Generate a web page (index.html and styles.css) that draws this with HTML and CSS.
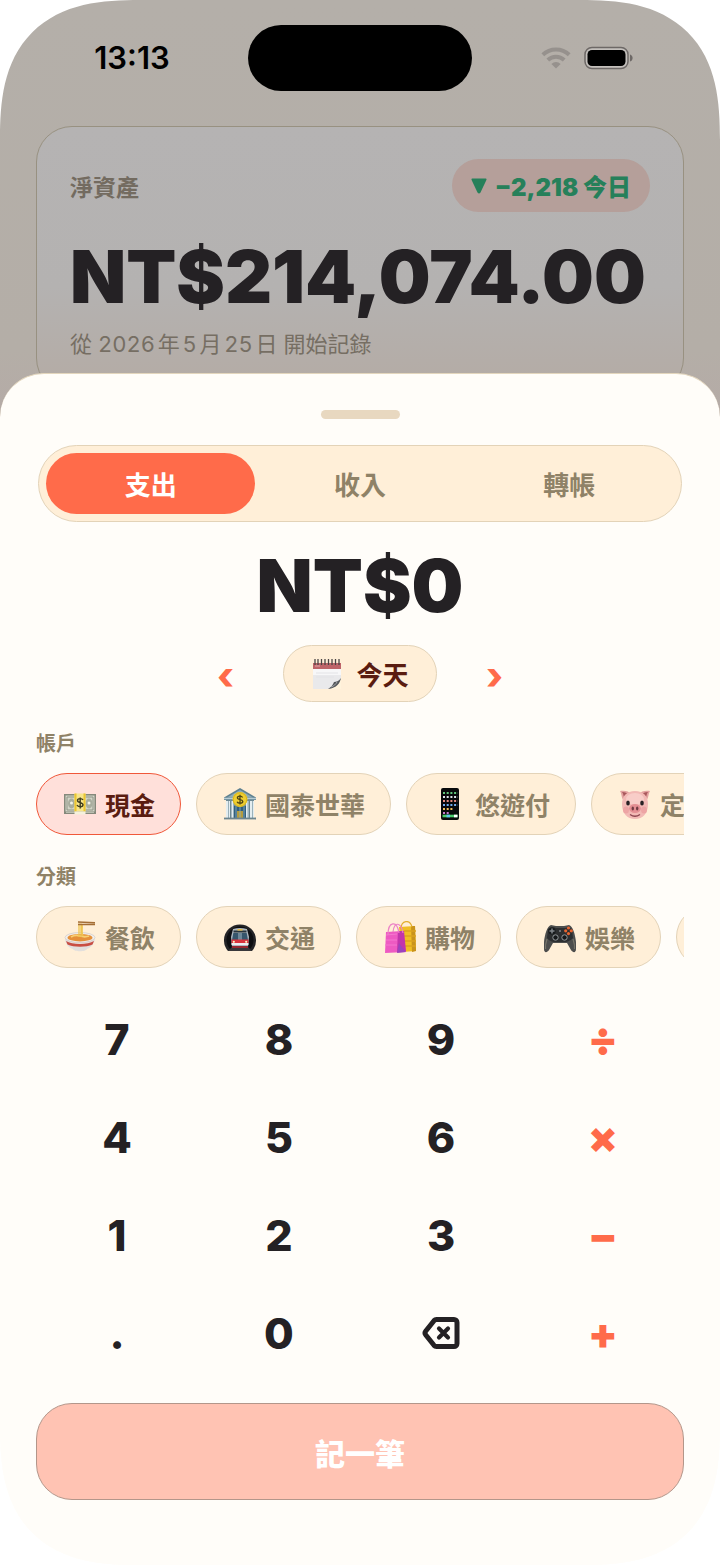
FILE: index.html
```html
<!DOCTYPE html>
<html lang="zh-Hant">
<head>
<meta charset="utf-8">
<meta name="viewport" content="width=device-width, initial-scale=1">
<title>記一筆</title>
<link rel="stylesheet" href="styles.css">
</head>
<body>
<div class="screen">
  <header class="status">
    <time class="status-time">13:13</time>
    <div class="island"></div>
    <div class="status-icons">
      <svg class="wifi" viewBox="0 0 30 22" aria-hidden="true"><g fill="none" stroke="currentColor" stroke-width="4"><path d="M1.8 7.8a19 19 0 0 1 26.4 0"/><path d="M6.8 13a12 12 0 0 1 16.4 0"/></g><path d="M15 21.5l-4.6-4.6a6.6 6.6 0 0 1 9.200 0z" fill="currentColor"/></svg>
      <svg class="battery" viewBox="0 0 50 24" aria-hidden="true"><rect x="1" y="1.500" width="43" height="21" rx="7" fill="#c4c0bc" stroke="#6d6866" stroke-width="1.500"/><rect x="3.500" y="4" width="38" height="16" rx="4.500"/><path d="M46 8.500c3.500 1 3.500 6 0 7z" fill="#6d6866"/></svg>
    </div>
  </header>

  <section class="worth">
    <div class="worth-head">
      <h2 class="worth-title">淨資產</h2>
      <p class="delta"><svg class="delta-mark" viewBox="0 0 16 16" aria-hidden="true"><path d="M1.200.5h13.600q1 .2.600 1.400L9.500 14.600q-1.500 1.800-3 0L.6 1.900Q.2.700 1.200.5z" fill="currentColor"/></svg><span>−2,218 今日</span></p>
    </div>
    <p class="worth-amount">NT$214,074.00</p>
    <p class="worth-since">從 2026年5月25日 開始記錄</p>
  </section>

  <main class="sheet">
    <div class="handle"></div>
    <div class="tabs" role="tablist">
      <button class="tab tab-on" role="tab" aria-selected="true">支出</button>
      <button class="tab" role="tab" aria-selected="false">收入</button>
      <button class="tab" role="tab" aria-selected="false">轉帳</button>
    </div>
    <p class="entry">NT$0</p>
    <div class="date">
      <button class="step">‹</button>
      <button class="day">
        <svg class="emoji" viewBox="0 0 32 32" aria-hidden="true"><path d="M2 5h28v20l-9 6H2z" fill="#e9e9eb"/><path d="M2 9h28v8H2z" fill="#f7f7f8"/><path d="M2 5h28v6H2z" fill="#bd6469"/><path d="M4 8h5" stroke="#e3a5a8"/><path d="M5 15h22M5 19h18" stroke="#e3e3e6"/><path d="M17 31c6-1 10-5 13-11v11z" fill="#fff3dc"/><path d="M17 31c3-2 5-4 6-7 2 0 5-1 7-4-1 5-4 10-13 11z" fill="#55585c"/><path d="M20 29c3-1 5-3 6-5" stroke="#a7aaad" fill="none"/><path d="M4 1v6M7 1v6M10.500 1v6M14 1v6M17.500 1v6M21 1v6M24.500 1v6M28 1v6" stroke="#4b4546" stroke-width="1.300"/></svg>
        <span>今天</span>
      </button>
      <button class="step">›</button>
    </div>

    <h3 class="label">帳戶</h3>
    <div class="chips">
      <button class="chip chip-on">
        <svg class="emoji" viewBox="0 0 32 32" aria-hidden="true"><rect y="6" width="32" height="20" fill="#85897b"/><rect x="1.500" y="7.500" width="29" height="16" fill="#d2d5c7"/><path d="M3 9h26v13H3z" fill="none" stroke="#8f9486"/><ellipse cx="7.500" cy="15.500" rx="3.500" ry="5" fill="#a8ad9e"/><ellipse cx="25" cy="15.500" rx="3.500" ry="5" fill="#a8ad9e"/><circle cx="7.500" cy="15" r="1.500" fill="#f1f2e8"/><circle cx="25" cy="15" r="1.500" fill="#f1f2e8"/><path d="M2 24.500h28" stroke="#b9bdaf"/><path d="M10.500 5.500h11v18h-11z" fill="#f7e58b"/><path d="M10.500 5.500h2v18h-2zM19.500 5.500h2v18h-2z" fill="#ecc52f"/><path d="M10.500 23.500h11v3h-11z" fill="#f5f1dc"/><path d="M19 12c-1-2-5.500-1.800-5.500.5 0 2.800 5.500 1.500 5.500 4.300 0 2.500-5 2.500-6 .2M16.200 9.500v11" fill="none" stroke="#3f3d1e" stroke-width="1.400"/></svg>
        <span>現金</span>
      </button>
      <button class="chip">
        <svg class="emoji" viewBox="0 0 32 32" aria-hidden="true"><path d="M2 12h28v18H2z" fill="#6e8993"/><path d="M0 9.500L16 0l16 9.500V12H0z" fill="#5e8191"/><path d="M3 9.500L16 2l13 7.500z" fill="#8facb7"/><path d="M0 10.500h32" stroke="#b8ccd4" stroke-width="1.500"/><path d="M10 18h12v12H10z" fill="#315f7d"/><path d="M13 23h6v7h-6z" fill="#b49c3e"/><path d="M16 18v12M12 18v12M20 18v12" stroke="#8fb5c8" stroke-width=".8"/><path d="M2 13h4v17H2zM7.500 13h2.500v17H7.500zM22 13h2.500v17H22zM26 13h4v17h-4z" fill="#e4edf0"/><path d="M4.500 13v17M9.500 13v17M24 13v17M28.500 13v17" stroke="#9ab1ba"/><path d="M0 30.500h32" stroke="#6d858e" stroke-width="1.800"/><circle cx="16" cy="11.500" r="7.500" fill="#efcf32"/><circle cx="16" cy="11.500" r="6.700" fill="none" stroke="#d9b51b"/><path d="M18.600 9.500c-1-2-5.200-1.700-5.200.3 0 2.500 5.400 1.300 5.400 3.700 0 2.200-5 2.200-5.700.2M16 6.700v9.800" fill="none" stroke="#4e4515" stroke-width="1.300"/></svg>
        <span>國泰世華</span>
      </button>
      <button class="chip">
        <svg class="emoji" viewBox="0 0 32 32" aria-hidden="true"><rect x="7" y="0" width="18" height="32" rx="2" fill="#08090b"/><g fill="none" stroke-width="2" stroke-dasharray="2 1.700"><path d="M9 5h15" stroke="#62c77c"/><path d="M9 9h15" stroke="#dfe4ea"/><path d="M9 13h15" stroke="#e58d80"/><path d="M9 17h15" stroke="#73aef0"/><path d="M9 21h11" stroke="#f0c15c"/><path d="M9 25h7" stroke="#c77bd0"/></g><path d="M8.500 28h15" stroke="#48cb6c" stroke-width="2.600"/><path d="M12.500 28h3.500" stroke="#5cc6ee" stroke-width="2.600"/><path d="M20 28h3.500" stroke="#fff" stroke-width="2.600"/></svg>
        <span>悠遊付</span>
      </button>
      <button class="chip">
        <svg class="emoji" viewBox="0 0 32 32" aria-hidden="true"><path d="M1 3c4-1 9 0 11 3L5 13C2 10 3 6 1 3zM31 3c-4-1-9 0-11 3l7 7c3-3 2-7 4-10z" fill="#e3a19f"/><path d="M3 4c3 0 5 1 7 3l-4 4C4 9 5 6 3 4zM29 4c-3 0-5 1-7 3l4 4c2-2 1-5 3-7z" fill="#a8585c"/><path d="M16 3c8 0 13 5 13 13 0 9-5 15-13 15S3 25 3 16C3 8 8 3 16 3z" fill="#f2b9b5"/><ellipse cx="16" cy="11" rx="9" ry="6" fill="#f8cdc8"/><ellipse cx="7" cy="22" rx="3" ry="3.500" fill="#eda4a4"/><ellipse cx="25" cy="22" rx="3" ry="3.500" fill="#eda4a4"/><ellipse cx="9" cy="15" rx="1.800" ry="2.500" fill="#282124"/><ellipse cx="23" cy="15" rx="1.800" ry="2.500" fill="#282124"/><ellipse cx="16" cy="20.500" rx="5.800" ry="4.500" fill="#e48e93"/><ellipse cx="13.800" cy="20.500" rx="1.200" ry="2" fill="#713a42"/><ellipse cx="18.200" cy="20.500" rx="1.200" ry="2" fill="#713a42"/><path d="M11 26.500q5 3.500 10 0" fill="none" stroke="#8d4650" stroke-width="1.300"/></svg>
        <span>定存</span>
      </button>
    </div>

    <h3 class="label">分類</h3>
    <div class="chips">
      <button class="chip">
        <svg class="emoji" viewBox="0 0 32 32" aria-hidden="true"><path d="M1 17h30c0 6-5 10-8 11-1 3-13 3-14 0-4-1-8-5-8-11z" fill="#e2dfdd"/><path d="M2 20c6 4 22 4 28 0l-1.500 3.500c-6 3-19 3-25 0z" fill="#c94e43"/><path d="M4 20q12 4 24 0" fill="none" stroke="#f2d8d0"/><ellipse cx="16" cy="16.500" rx="15" ry="5" fill="#f1eeec" stroke="#c9c4c1" stroke-width=".6"/><ellipse cx="16" cy="16.700" rx="12.500" ry="3.700" fill="#e5903a"/><path d="M7 16q4-2.500 9-1t9 0" fill="none" stroke="#f8cf72" stroke-width="1.800"/><path d="M15 16V2.500M17 16V2.500M19 15c-2-4 0-6-1-12" fill="none" stroke="#efc551" stroke-width="1.300"/><path d="M14 1l17 .8M14 3.500h17" stroke="#a46e36" stroke-width="1.400"/></svg>
        <span>餐飲</span>
      </button>
      <button class="chip">
        <svg class="emoji" viewBox="0 0 32 32" aria-hidden="true"><path d="M4 30a16 16 0 1 1 24 0z" fill="#242427"/><path d="M6 28a13.500 13.500 0 1 1 20 0z" fill="#0d0e11"/><path d="M4 30l4-4h16l4 4z" fill="#39383b"/><path d="M9 8q7-2 14 0l2 8-1 10H8L7 16z" fill="#aeb8c0"/><path d="M9.500 9.500h13v2h-13z" fill="#27343b"/><path d="M13.500 8h5v1.600h-5z" fill="#e5bd4a"/><path d="M9.300 12h13.400l1.300 7H8z" fill="#36566c"/><path d="M15 12v7M17 12v7" stroke="#a4bac4"/><path d="M7.500 18.500h17V22h-17z" fill="#d9343d"/><path d="M7.500 22h17v2h-17z" fill="#eeeef0"/><circle cx="9.800" cy="20.800" r="1.100" fill="#fff1c1"/><circle cx="22.200" cy="20.800" r="1.100" fill="#fff1c1"/><path d="M8 25h16v2H8z" fill="#9a2931"/></svg>
        <span>交通</span>
      </button>
      <button class="chip">
        <svg class="emoji" viewBox="0 0 32 32" aria-hidden="true"><path d="M15 6l16-1 1 25-14 1z" fill="#f0bd24"/><path d="M27 5l4 0 1 25-4 1z" fill="#c9931b"/><path d="M20 10h12M20 15h12M20 20h12M20 25h12" stroke="#dca21e" stroke-width="1.600"/><path d="M17 8c0-9 9-10 11-2" fill="none" stroke="#e2af30" stroke-width="1.200"/><path d="M2 11l16-1 4 21-21 1z" fill="#ee5ac2"/><path d="M14 10h6l2 20-9 1z" fill="#c335ac"/><path d="M15 22l7 9-9 1z" fill="#9c43bd"/><path d="M2 14l11-1M2 19h11M1 24h12" stroke="#f577d0"/><path d="M4 14C4 0 13-1 15 12M9 11c1-11 8-10 10 1" fill="none" stroke="#ec83c6" stroke-width="1.200"/></svg>
        <span>購物</span>
      </button>
      <button class="chip">
        <svg class="emoji" viewBox="0 0 32 32" aria-hidden="true"><path d="M7 4l5 1h8l5-1c5 1 8 17 7 24 0 4-3 4-5 1l-4-7H9l-4 7c-2 3-5 3-5-1C-1 21 2 5 7 4z" fill="#4d4e4d"/><path d="M4 8c4-3 7-1 8-1h8c2 0 5-1 8 1l1 9c-5 5-9 4-13 4S7 22 3 17z" fill="#2c2e30"/><path d="M3 18Q1 24 1.500 28M29 18q2 6 1.500 10" fill="none" stroke="#77756b" stroke-width="1.200"/><circle cx="8" cy="10" r="3.600" fill="#171a1c"/><path d="M8 7.500v5M5.500 10h5" stroke="#80858a" stroke-width="1.500"/><g fill="#e7642f"><circle cx="24.500" cy="7" r="1.600"/><circle cx="21.700" cy="9.800" r="1.600"/><circle cx="27.300" cy="9.800" r="1.600"/><circle cx="24.500" cy="12.600" r="1.600"/></g><g fill="#15181a" stroke="#92979a"><circle cx="11.500" cy="16.500" r="2.700"/><circle cx="20.500" cy="16.500" r="2.700"/></g><circle cx="16" cy="10" r="1" fill="#7f8588"/></svg>
        <span>娛樂</span>
      </button>
      <button class="chip" aria-label="更多"><span class="emoji"></span></button>
    </div>

    <div class="keys">
      <button class="key">7</button><button class="key">8</button><button class="key">9</button><button class="key op">÷</button>
      <button class="key">4</button><button class="key">5</button><button class="key">6</button><button class="key op">×</button>
      <button class="key">1</button><button class="key">2</button><button class="key">3</button><button class="key op">−</button>
      <button class="key">.</button><button class="key">0</button>
      <button class="key" aria-label="刪除"><svg class="erase" viewBox="0 0 38 34" aria-hidden="true"><g fill="none" stroke="currentColor" stroke-linecap="round" stroke-linejoin="round"><path d="M14.500 3.500H32a3 3 0 0 1 3 3v21a3 3 0 0 1-3 3H14.500q-1.500 0-2.500-1.200L3.800 19q-1.600-2 0-4L12 4.700q1-1.200 2.500-1.200z" stroke-width="5"/><path d="M17 12.500l9 9m0-9l-9 9" stroke-width="4.200"/></g></svg></button>
      <button class="key op">+</button>
    </div>
    <button class="save" disabled>記一筆</button>
  </main>
</div>
</body>
</html>
```
FILE: styles.css
```css
* { box-sizing: border-box; }

body {
  margin: 0;
  background: #fff;
  color: #242124;
  font-family: Inter, "Noto Sans CJK TC", sans-serif;
}

h2, h3, p { margin: 0; }

button {
  margin: 0;
  padding: 0;
  border: 0;
  background: none;
  color: inherit;
  font: inherit;
}

.screen {
  display: flex;
  flex-direction: column;
  min-height: 100vh;
  overflow: hidden;
  border-radius: 116px;
  background: linear-gradient(#b4afa9 0, #b4aea7 350px, #b5aaa6 425px, #fffdf9 430px);
}

@supports (corner-shape: superellipse(1.4)) {
  .screen {
    border-radius: 140px;
    corner-shape: superellipse(1.4);
  }
}

/* Status bar */
.status {
  display: grid;
  grid-template-columns: 1fr 224px 1fr;
  align-items: center;
  padding: 25px 36px 35px;
}

.status-time {
  padding-right: 20px;
  color: #000;
  font-size: 31px;
  font-weight: 600;
  text-align: center;
  line-height: 36px;
}

.island {
  height: 66px;
  border-radius: 33px;
  background: #000;
}

.status-icons {
  display: flex;
  align-items: center;
  justify-content: flex-end;
  gap: 13px;
  padding-right: 50px;
}

.wifi { width: 30px; height: 22px; color: #96918d; }
.battery { width: 50px; height: 24px; }

/* Net worth card */
.worth {
  height: 268px;
  margin: 0 36px;
  padding: 32px 33px;
  border: 1px solid #989181;
  border-radius: 36px;
  background: linear-gradient(#b5b3b3 0, #b4b2b1 160px, #b4aca6 250px);
}

.worth-head {
  display: flex;
  align-items: center;
  justify-content: space-between;
}

.worth-title {
  color: #736b60;
  font-size: 23px;
  font-weight: 700;
}

.delta {
  display: flex;
  align-items: center;
  gap: 8px;
  height: 53px;
  padding: 0 19px;
  border-radius: 27px;
  background: #b59f9a;
  color: #26805a;
  font-size: 24px;
  font-weight: 900;
}

.delta-mark { width: 16px; height: 16px; }

.worth-amount {
  margin-top: 25px;
  font-size: 73px;
  font-weight: 900;
  line-height: 80px;
  white-space: nowrap;
}

.worth-since {
  margin-top: 13px;
  color: #766e63;
  font-size: 22px;
  font-variant-numeric: tabular-nums;
  line-height: 28px;
  text-autospace: normal;
}

/* Entry sheet */
.sheet {
  position: relative;
  flex: 1;
  margin-top: -21px;
  padding: 36px 36px 64px;
  border-top: 1px solid #e3d6bd;
  border-radius: 44px 44px 0 0;
  background: #fffdf9;
}

.handle {
  width: 79px;
  height: 9px;
  margin: 0 auto 26px;
  border-radius: 5px;
  background: #e8d8c0;
}

.tabs {
  display: grid;
  grid-template-columns: repeat(3, 1fr);
  margin: 0 2px;
  padding: 7px;
  border: 1px solid #e3d3b8;
  border-radius: 39px;
  background: #ffefd8;
}

.tab {
  height: 61px;
  border-radius: 31px;
  color: #8f8267;
  font-size: 26px;
  font-weight: 700;
}

.tab-on { background: #ff6b4a; color: #fff; }

.entry {
  margin-top: 24px;
  font-size: 73px;
  font-weight: 900;
  line-height: 80px;
  text-align: center;
}

.date {
  display: flex;
  align-items: center;
  justify-content: center;
  gap: 29px;
  margin-top: 19px;
}

.step {
  width: 58px;
  height: 57px;
  color: #ff6b4a;
  font-size: 38px;
  font-weight: 800;
  line-height: 60px;
}

.day {
  display: flex;
  align-items: center;
  gap: 13px;
  height: 57px;
  padding: 0 27px;
  border: 1px solid #e3d3b8;
  border-radius: 29px;
  background: #ffefd8;
  color: #5a1c10;
  font-size: 26px;
  font-weight: 700;
}

.label {
  margin: 30px 0 17px;
  color: #8f8267;
  font-size: 20px;
  font-weight: 700;
  line-height: 24px;
}

.chips {
  display: flex;
  gap: 15px;
  overflow: hidden;
}

.chip {
  display: flex;
  flex: none;
  align-items: center;
  gap: 9px;
  height: 62px;
  padding: 0 25px 0 27px;
  border: 1px solid #e3d3b8;
  border-radius: 31px;
  background: #ffefd8;
  color: #8f8267;
  font-size: 25px;
  font-weight: 600;
  white-space: nowrap;
}

.chip-on {
  border-color: #f0583a;
  background: #ffe0da;
  color: #5a1c10;
}

.emoji {
  flex: none;
  width: 32px;
  height: 32px;
}

/* Keypad */
.keys {
  display: grid;
  grid-template-columns: repeat(4, 1fr);
  grid-auto-rows: 98px;
  margin-top: 22px;
}

.key {
  display: grid;
  place-items: center;
  font-size: 43px;
  font-weight: 800;
}

.op { color: #ff6b4a; font-weight: 900; }

.erase { width: 38px; height: 34px; }

.save {
  width: 100%;
  height: 97px;
  margin-top: 21px;
  border: 1px solid #b3968a;
  border-radius: 36px;
  background: #ffc3b3;
  color: #fff;
  font-size: 30px;
  font-weight: 900;
}
```
